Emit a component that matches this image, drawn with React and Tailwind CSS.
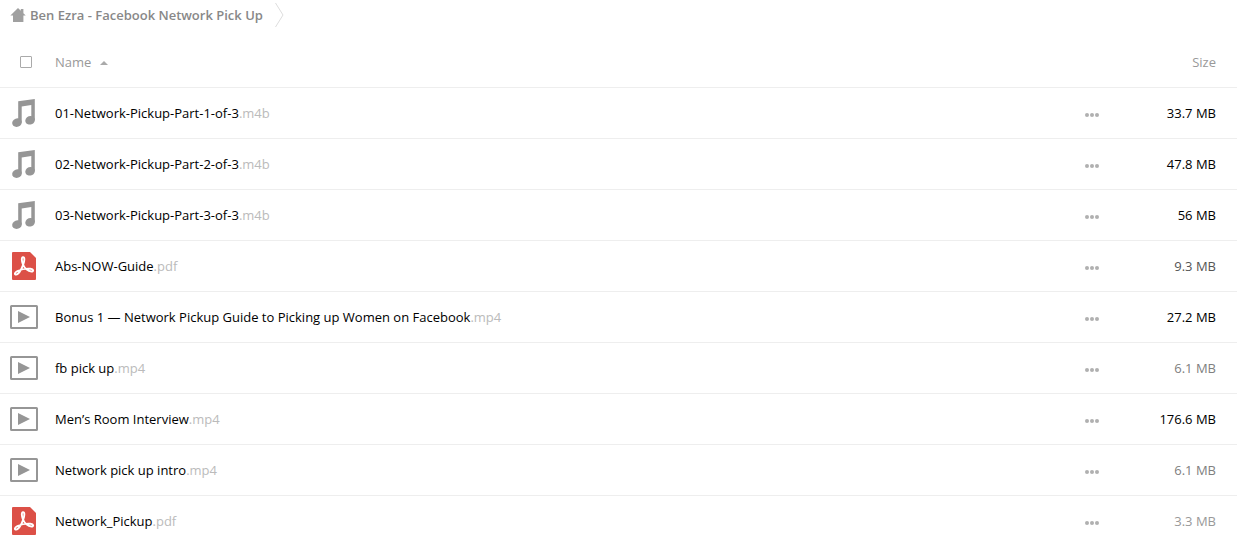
import { useState } from 'react'

const FILES = [
    { name: '01-Network-Pickup-Part-1-of-3', ext: '.m4b', type: 'audio', size: '33.7 MB', tone: 'text-black' },
    { name: '02-Network-Pickup-Part-2-of-3', ext: '.m4b', type: 'audio', size: '47.8 MB', tone: 'text-black' },
    { name: '03-Network-Pickup-Part-3-of-3', ext: '.m4b', type: 'audio', size: '56 MB', tone: 'text-black' },
    { name: 'Abs-NOW-Guide', ext: '.pdf', type: 'pdf', size: '9.3 MB', tone: 'text-[#555555]' },
    { name: 'Bonus 1 — Network Pickup Guide to Picking up Women on Facebook', ext: '.mp4', type: 'video', size: '27.2 MB', tone: 'text-black' },
    { name: 'fb pick up', ext: '.mp4', type: 'video', size: '6.1 MB', tone: 'text-[#808080]' },
    { name: 'Men’s Room Interview', ext: '.mp4', type: 'video', size: '176.6 MB', tone: 'text-black' },
    { name: 'Network pick up intro', ext: '.mp4', type: 'video', size: '6.1 MB', tone: 'text-[#808080]' },
    { name: 'Network_Pickup', ext: '.pdf', type: 'pdf', size: '3.3 MB', tone: 'text-[#999999]' },
]

function HomeIcon() {
    return (
        <svg width="16" height="16" viewBox="0 0 16 16" fill="#a0a0a0" aria-hidden="true">
            <path d="M8 1 0.4 8.6H3V15h10.4V8.6h2.3L13.4 6.2V2h-2.6v1.7z" />
        </svg>
    )
}

function AudioIcon() {
    return (
        <svg width="32" height="32" viewBox="0 0 32 32" fill="#969696" aria-hidden="true">
            <path d="M10.2 4.3 26.8 2V23H23.3V8L13.7 9.4V25.5H10.2z" />
            <ellipse cx="9" cy="25.6" rx="4.9" ry="4.2" transform="rotate(-20 9 25.6)" />
            <ellipse cx="22.1" cy="23.3" rx="4.9" ry="4.2" transform="rotate(-20 22.1 23.3)" />
        </svg>
    )
}

function VideoIcon() {
    return (
        <svg width="32" height="32" viewBox="0 0 32 32" aria-hidden="true">
            <rect x="3" y="5" width="26" height="22" rx="0.5" fill="none" stroke="#969696" strokeWidth="2" />
            <path d="M10 10v12l12-6z" fill="#969696" />
        </svg>
    )
}

function PdfIcon() {
    return (
        <svg width="32" height="32" viewBox="0 0 32 32" aria-hidden="true">
            <path d="M5 2h17l6 6v21a1 1 0 0 1-1 1H5a1 1 0 0 1-1-1V3a1 1 0 0 1 1-1z" fill="#dc5047" />
            <path
                d="M15 14.5C13.7 11.5 13.2 7.3 15 7.1c2-.1 1.5 4.2.2 7.6-1.6 4.3-4.6 9.6-7 9.9-1.9.1-2-2 1.2-3.5 3.6-1.7 9.4-2.7 13-2.4 3.5.3 3.5 2.9 1 2.8-3.4-.2-7-3.5-8.4-7z"
                fill="none"
                stroke="#fff"
                strokeWidth="1.9"
                strokeLinejoin="round"
            />
        </svg>
    )
}

const ICONS = { audio: AudioIcon, video: VideoIcon, pdf: PdfIcon }

function FileRow({ file }) {
    const Icon = ICONS[file.type]
    return (
        <tr className="hover:bg-[#f8f8f8]">
            <td className="h-[51px] w-[55px] border-b border-[#eeeeee] pl-2">
                <Icon />
            </td>
            <td className="border-b border-[#eeeeee]">
                <a href="#" className="text-black">
                    {file.name}<span className="text-[#bbbbbb]">{file.ext}</span>
                </a>
            </td>
            <td className="w-16 border-b border-[#eeeeee]">
                <button type="button" aria-label="Actions" className="block cursor-pointer p-2">
                    <svg width="16" height="16" viewBox="0 0 16 16" fill="#b0b0b0">
                        <circle cx="3" cy="10" r="2" />
                        <circle cx="8" cy="10" r="2" />
                        <circle cx="13" cy="10" r="2" />
                    </svg>
                </button>
            </td>
            <td className={`w-[97px] border-b border-[#eeeeee] pr-[21px] text-right ${file.tone}`}>{file.size}</td>
        </tr>
    )
}

export default function App() {
    const [descending, setDescending] = useState(false)
    const files = descending ? [...FILES].reverse() : FILES

    return (
        <div className="h-screen overflow-hidden bg-white font-['Open_Sans',sans-serif] text-[13px] leading-5">
            <nav className="flex h-[37px] items-start pl-2.5">
                <a href="#" className="flex items-center gap-1 pt-[5px] font-semibold text-[#888888]">
                    <HomeIcon />
                    Ben Ezra - Facebook Network Pick Up
                </a>
                <svg width="10" height="30" viewBox="0 0 10 30" className="ml-3" fill="none" stroke="#dddddd" aria-hidden="true">
                    <path d="M.5 3 8 15 .5 27" />
                </svg>
            </nav>

            <table className="w-full border-separate border-spacing-0">
                <thead>
                    <tr className="text-[#999999]">
                        <th className="h-[51px] border-b border-[#eeeeee] pl-5 text-left">
                            <input
                                type="checkbox"
                                aria-label="Select all"
                                className="block size-3 appearance-none rounded-[1px] border border-[#aaaaaa] checked:bg-[#aaaaaa]"
                            />
                        </th>
                        <th className="border-b border-[#eeeeee] text-left font-normal">
                            <button
                                type="button"
                                onClick={() => setDescending(!descending)}
                                className="flex cursor-pointer items-center gap-2"
                            >
                                Name
                                <svg width="10" height="6" viewBox="0 0 10 6" fill="#aaaaaa" className={descending ? 'rotate-180' : ''}>
                                    <path d="M1 6 5 2l4 4z" />
                                </svg>
                            </button>
                        </th>
                        <th className="border-b border-[#eeeeee]" />
                        <th className="border-b border-[#eeeeee] pr-[21px] text-right font-normal">Size</th>
                    </tr>
                </thead>
                <tbody>
                    {files.map((file) => (
                        <FileRow key={file.name} file={file} />
                    ))}
                </tbody>
            </table>
        </div>
    )
}
